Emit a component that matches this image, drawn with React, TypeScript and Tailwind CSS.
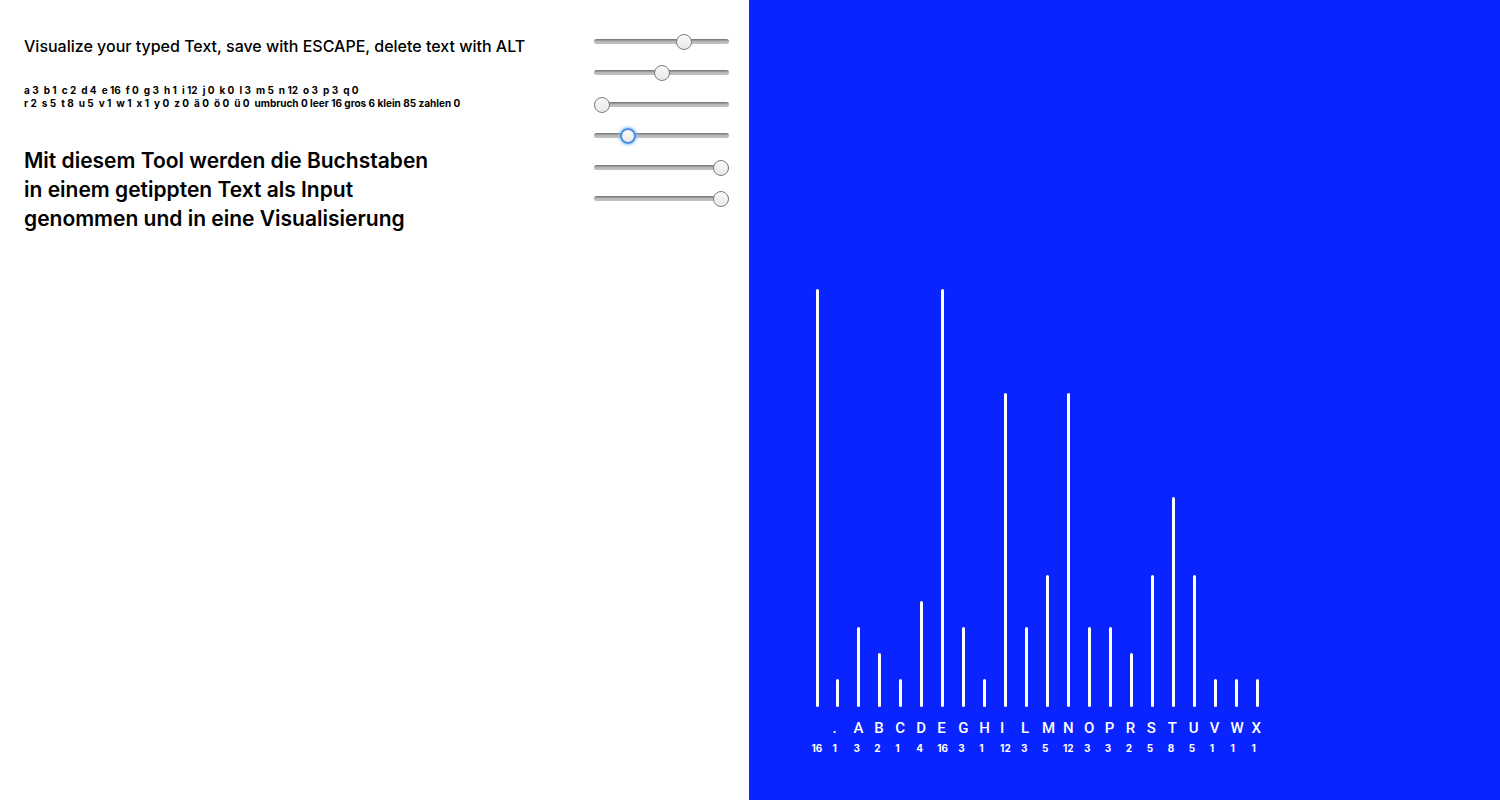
import { useState } from "react";

interface Count {
  char: string;
  count: number;
}

const BARS: Count[] = [
  { char: " ", count: 16 },
  { char: ".", count: 1 },
  { char: "A", count: 3 },
  { char: "B", count: 2 },
  { char: "C", count: 1 },
  { char: "D", count: 4 },
  { char: "E", count: 16 },
  { char: "G", count: 3 },
  { char: "H", count: 1 },
  { char: "I", count: 12 },
  { char: "L", count: 3 },
  { char: "M", count: 5 },
  { char: "N", count: 12 },
  { char: "O", count: 3 },
  { char: "P", count: 3 },
  { char: "R", count: 2 },
  { char: "S", count: 5 },
  { char: "T", count: 8 },
  { char: "U", count: 5 },
  { char: "V", count: 1 },
  { char: "W", count: 1 },
  { char: "X", count: 1 },
];

const ROW_ONE = [
  "a 3", "b 1", "c 2", "d 4", "e 16", "f 0", "g 3", "h 1", "i 12",
  "j 0", "k 0", "l 3", "m 5", "n 12", "o 3", "p 3", "q 0",
];

const ROW_TWO = ["r 2", "s 5", "t 8", "u 5", "v 1", "w 1", "x 1", "y 0", "z 0", "ä 0", "ö 0", "ü 0"];

const SLIDERS = [
  { name: "Position X", value: 69 },
  { name: "Position Y", value: 51 },
  { name: "Rotation", value: 0 },
  { name: "Spacing", value: 22, active: true },
  { name: "Height", value: 100 },
  { name: "Opacity", value: 100 },
];

const THUMB_ACTIVE =
  "[&::-webkit-slider-thumb]:border-2 [&::-webkit-slider-thumb]:border-[#4a90e2] [&::-webkit-slider-thumb]:shadow-[0_0_3px_1px_#8fc1f7]";
const THUMB_IDLE =
  "[&::-webkit-slider-thumb]:border [&::-webkit-slider-thumb]:border-[#7d7d7d]";

function Slider({ name, value, active }: { name: string; value: number; active?: boolean }) {
  const [current, setCurrent] = useState(value);

  return (
    <input
      type="range"
      aria-label={name}
      min={0}
      max={100}
      value={current}
      onChange={(e) => setCurrent(Number(e.target.value))}
      className={`block h-4 w-full appearance-none bg-transparent outline-none [&::-webkit-slider-runnable-track]:h-[5px] [&::-webkit-slider-runnable-track]:rounded-sm [&::-webkit-slider-runnable-track]:bg-linear-to-b [&::-webkit-slider-runnable-track]:from-[#7e7e7e] [&::-webkit-slider-runnable-track]:from-20% [&::-webkit-slider-runnable-track]:via-[#b5b5b5] [&::-webkit-slider-runnable-track]:via-40% [&::-webkit-slider-runnable-track]:to-[#c2c2c2] [&::-webkit-slider-thumb]:-mt-[5px] [&::-webkit-slider-thumb]:size-4 [&::-webkit-slider-thumb]:appearance-none [&::-webkit-slider-thumb]:rounded-full [&::-webkit-slider-thumb]:bg-linear-to-b [&::-webkit-slider-thumb]:from-[#fafafa] [&::-webkit-slider-thumb]:to-[#e8e8e8] ${active ? THUMB_ACTIVE : THUMB_IDLE}`}
    />
  );
}

function CountRow({ items, rest }: { items: string[]; rest?: string }) {
  return (
    <p className="flex gap-[5px] whitespace-nowrap">
      {items.map((item) => (
        <span key={item}>{item}</span>
      ))}
      {rest && <span>{rest}</span>}
    </p>
  );
}

function Chart() {
  return (
    <div className="grid w-[461px] grid-cols-22 text-white">
      {BARS.map(({ char, count }) => (
        <div key={char} className="flex flex-col justify-end">
          <div className="ml-1 w-[3px] rounded-full bg-white" style={{ height: count * 26 + 2 }} />
          <span className="mt-[11px] h-5 font-['Roboto',sans-serif] text-[15px] leading-5 font-medium">{char}</span>
          <span className="h-5 text-[10px] leading-5 font-bold">{count}</span>
        </div>
      ))}
    </div>
  );
}

export default function App() {
  const [text, setText] = useState(
    "Mit diesem Tool werden die Buchstaben in einem getippten Text als Input genommen und in eine Visualisierung"
  );

  return (
    <main className="flex min-h-screen bg-white font-['Inter',sans-serif] text-black">
      <section className="flex w-[49.9%] justify-between pr-5 pl-6">
        <div className="min-w-0 pt-9">
          <h1 className="text-base leading-5 font-medium whitespace-nowrap">
            Visualize your typed Text, save with ESCAPE, delete text with ALT
          </h1>
          <div className="mt-7 text-[10px] leading-[13px] font-bold">
            <CountRow items={ROW_ONE} />
            <CountRow items={ROW_TWO} rest="umbruch 0 leer 16 gros 6 klein 85 zahlen 0" />
          </div>
          <textarea
            aria-label="Text"
            value={text}
            onChange={(e) => setText(e.target.value)}
            rows={3}
            className="mt-9 block w-[420px] resize-none overflow-hidden bg-transparent text-[21px] leading-[29px] font-semibold outline-none"
          />
        </div>
        <div className="mt-[33px] flex h-[174px] w-[135px] shrink-0 flex-col justify-between">
          {SLIDERS.map((slider) => (
            <Slider key={slider.name} {...slider} />
          ))}
        </div>
      </section>
      <section className="flex flex-1 items-end bg-[#0a24ff] pb-[42px] pl-[63px]">
        <Chart />
      </section>
    </main>
  );
}
